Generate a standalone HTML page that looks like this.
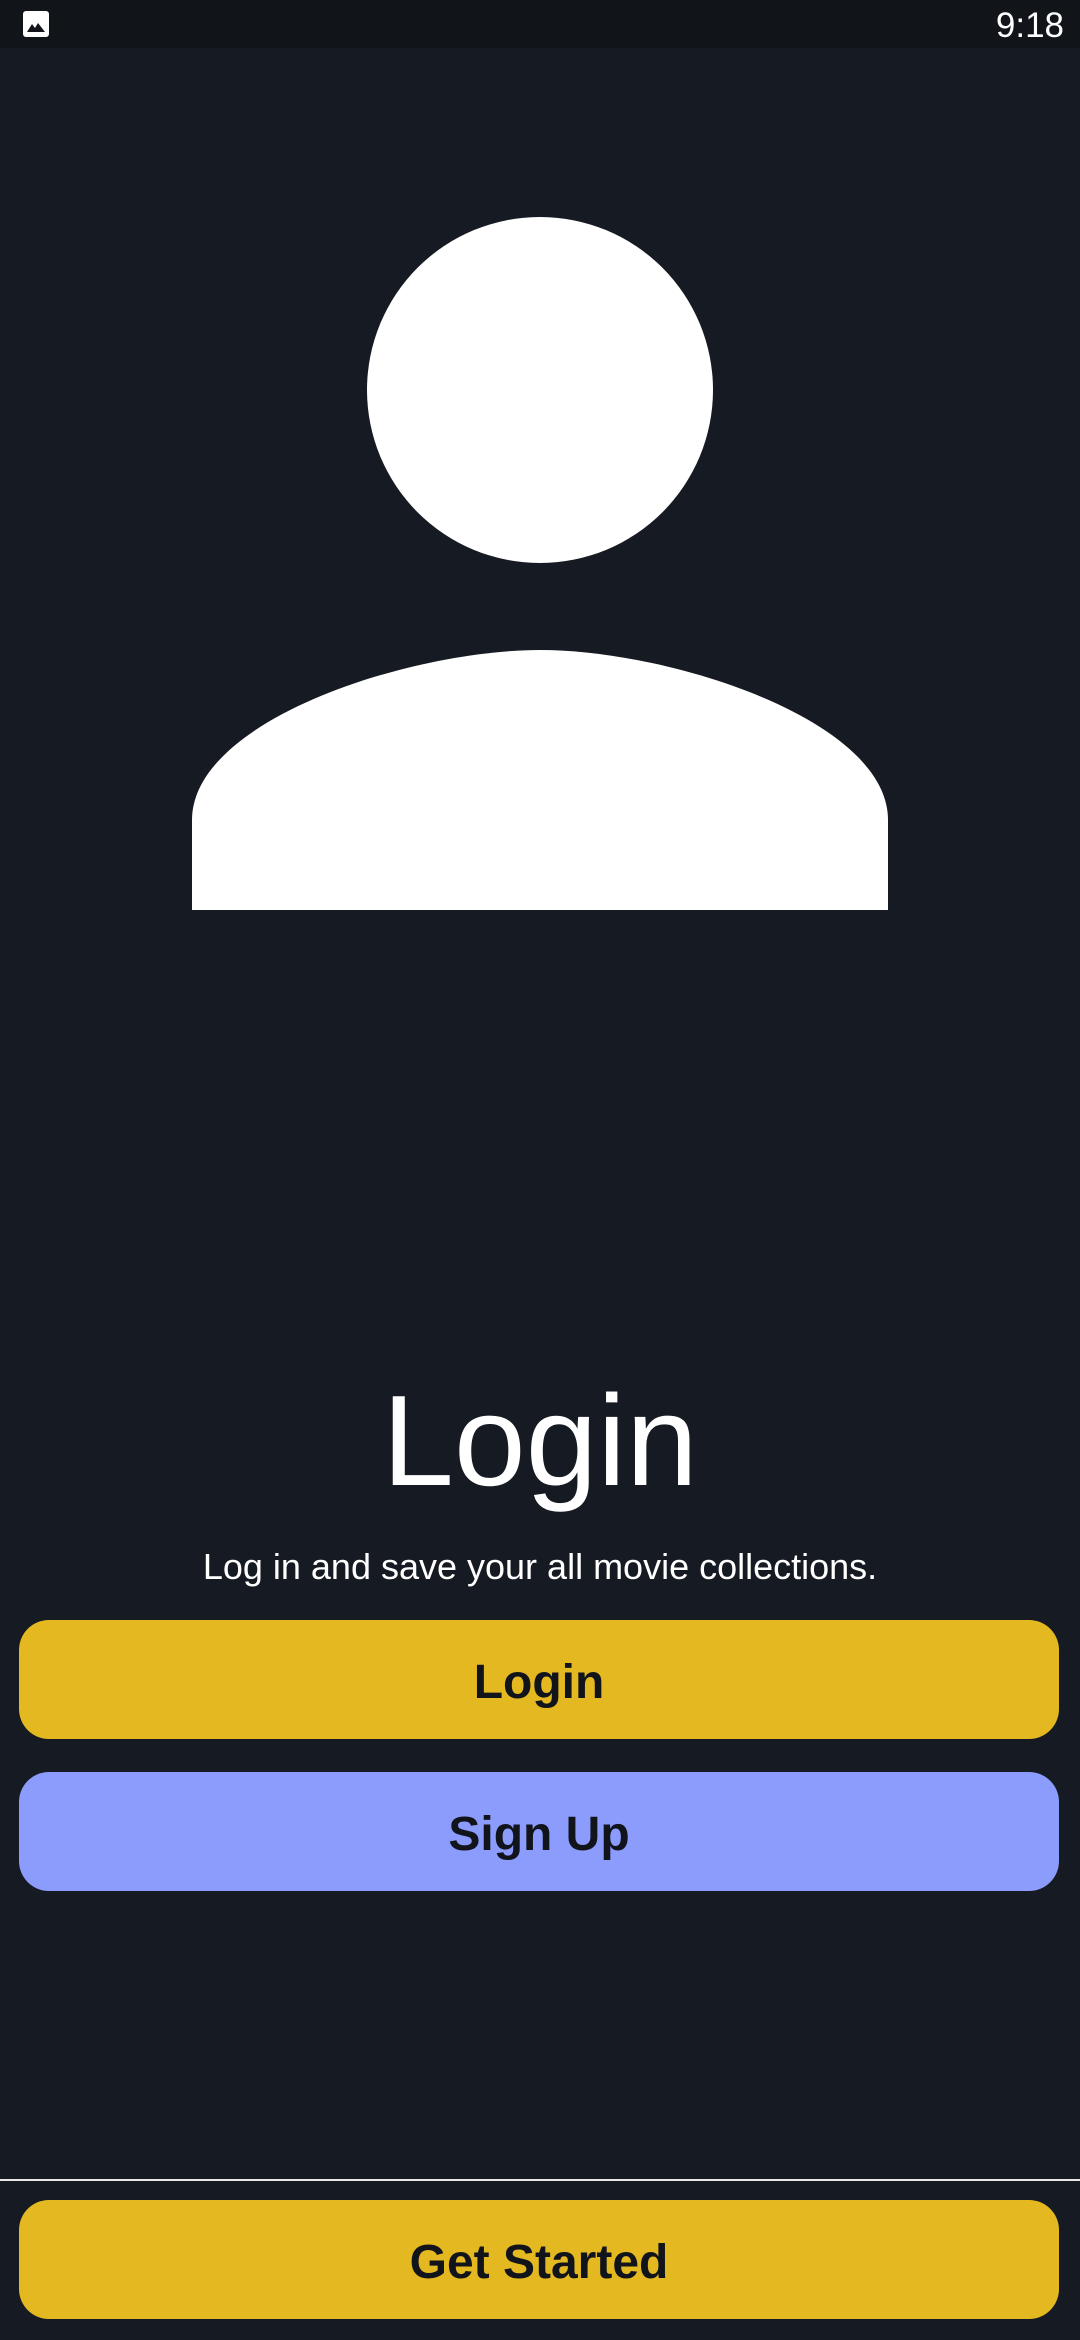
<!DOCTYPE html>
<html><head><meta charset="utf-8"><style>
html,body{margin:0;padding:0;}
body{width:1080px;height:2340px;background:#161a22;position:relative;overflow:hidden;font-family:"Liberation Sans",Roboto,sans-serif;}
.sb{position:absolute;left:0;top:0;width:1080px;height:48px;background:#111419;}
.time{position:absolute;right:16px;top:6px;color:#fff;font-size:35px;}
.btn{position:absolute;left:19px;width:1040px;height:119px;box-sizing:border-box;padding-top:5px;border-radius:30px;display:flex;align-items:center;justify-content:center;font-weight:bold;font-size:48px;color:#11141a;}
</style></head><body>
<div class="sb">
<svg style="position:absolute;left:23px;top:11px" width="26" height="26" viewBox="0 0 26 26"><rect x="0" y="0" width="26" height="26" rx="3" fill="#fff"/><path d="M4 21 L9 13 L12 17 L15 12 L22 21Z" fill="#111419"/></svg>
<div class="time">9:18</div>
</div>
<svg style="position:absolute;left:0;top:0" width="1080" height="950">
<circle cx="540" cy="390" r="173" fill="#fff"/>
<path d="M192 910 L192 820 C192 720 410 650 540 650 C670 650 888 720 888 820 L888 910 Z" fill="#fff"/>
</svg>
<div style="position:absolute;left:0;width:1080px;top:1361px;text-align:center;color:#fff;font-size:129px;line-height:160px;">Login</div>
<div style="position:absolute;left:0;width:1080px;top:1545px;text-align:center;color:#fff;font-size:36px;line-height:44px;">Log in and save your all movie collections.</div>
<div class="btn" style="top:1620px;background:#e4b820;">Login</div>
<div class="btn" style="top:1772px;background:#8b9cfd;">Sign Up</div>
<div style="position:absolute;left:0;top:2179px;width:1080px;height:2px;background:#e8e8e8;"></div>
<div class="btn" style="top:2200px;background:#e4b820;">Get Started</div>
</body></html>
